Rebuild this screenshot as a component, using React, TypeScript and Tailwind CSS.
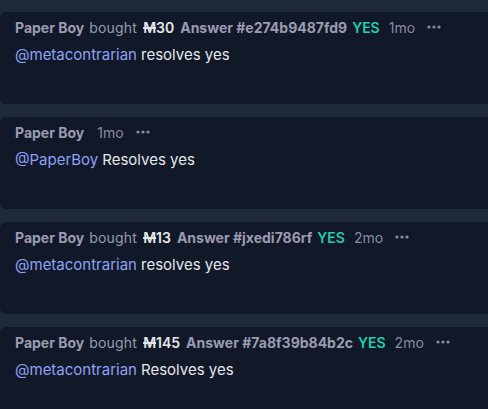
import React from "react";

const Dots = () => (
  <svg width="14" height="4" viewBox="0 0 14 4" className="ml-[12px] inline-block">
    <circle cx="2" cy="2" r="1.6" fill="#8b8ba3" />
    <circle cx="7" cy="2" r="1.6" fill="#8b8ba3" />
    <circle cx="12" cy="2" r="1.6" fill="#8b8ba3" />
  </svg>
);

const Mana = ({ n }: { n: string }) => (
  <span className="font-semibold text-[#e5e7eb]">
    <span className="line-through decoration-[1.5px]">M</span>
    {n}
  </span>
);

type Bet = { amount: string; hash: string; time: string; text: string };

const BetCard = ({ b }: { b: Bet }) => (
  <div className="h-[92px] shrink-0 bg-[#111827] rounded-l-md pl-[15px] pt-[5px] w-[520px]">
    <div className="flex items-center h-[20px] text-[14px] whitespace-nowrap">
      <span className="font-bold text-[#9b9bb2]">Paper Boy</span>
      <span className="ml-[5px] text-[#9b9bb2] tracking-[0.2px]">bought</span>
      <span className="ml-[6px]">
        <Mana n={b.amount} />
      </span>
      <span className="ml-[6px] font-bold text-[#9b9bb2]">Answer {b.hash}</span>
      <span className="ml-[5px] font-semibold text-[#22cdb0]">YES</span>
      <span className="ml-[9px] text-[#8b8ba3]">{b.time}</span>
      <Dots />
    </div>
    <div className="mt-[8px] h-[20px] flex items-center text-[15px] whitespace-nowrap">
      <span className="text-[#8fa2f7]">@metacontrarian</span>
      <span className="ml-[4px] text-[#e5e7eb]">{b.text}</span>
    </div>
  </div>
);

export default function App() {
  return (
    <div
      className="w-[488px] h-[409px] overflow-hidden bg-[#1f2939] pt-[12px] flex flex-col gap-[13px]"
      style={{ fontFamily: "Inter, 'Noto Sans', sans-serif" }}
    >
      <BetCard b={{ amount: "30", hash: "#e274b9487fd9", time: "1mo", text: "resolves yes" }} />
      <div className="h-[92px] shrink-0 bg-[#111827] rounded-l-md pl-[15px] pt-[5px] w-[520px]">
        <div className="flex items-center h-[20px] text-[14px] whitespace-nowrap">
          <span className="font-bold text-[#9b9bb2]">Paper Boy</span>
          <span className="ml-[13px] text-[#8b8ba3]">1mo</span>
          <Dots />
        </div>
        <div className="mt-[8px] h-[20px] flex items-center text-[15px] whitespace-nowrap">
          <span className="text-[#8fa2f7]">@PaperBoy</span>
          <span className="ml-[4px] text-[#e5e7eb]">Resolves yes</span>
        </div>
      </div>
      <BetCard b={{ amount: "13", hash: "#jxedi786rf", time: "2mo", text: "resolves yes" }} />
      <BetCard b={{ amount: "145", hash: "#7a8f39b84b2c", time: "2mo", text: "Resolves yes" }} />
    </div>
  );
}
